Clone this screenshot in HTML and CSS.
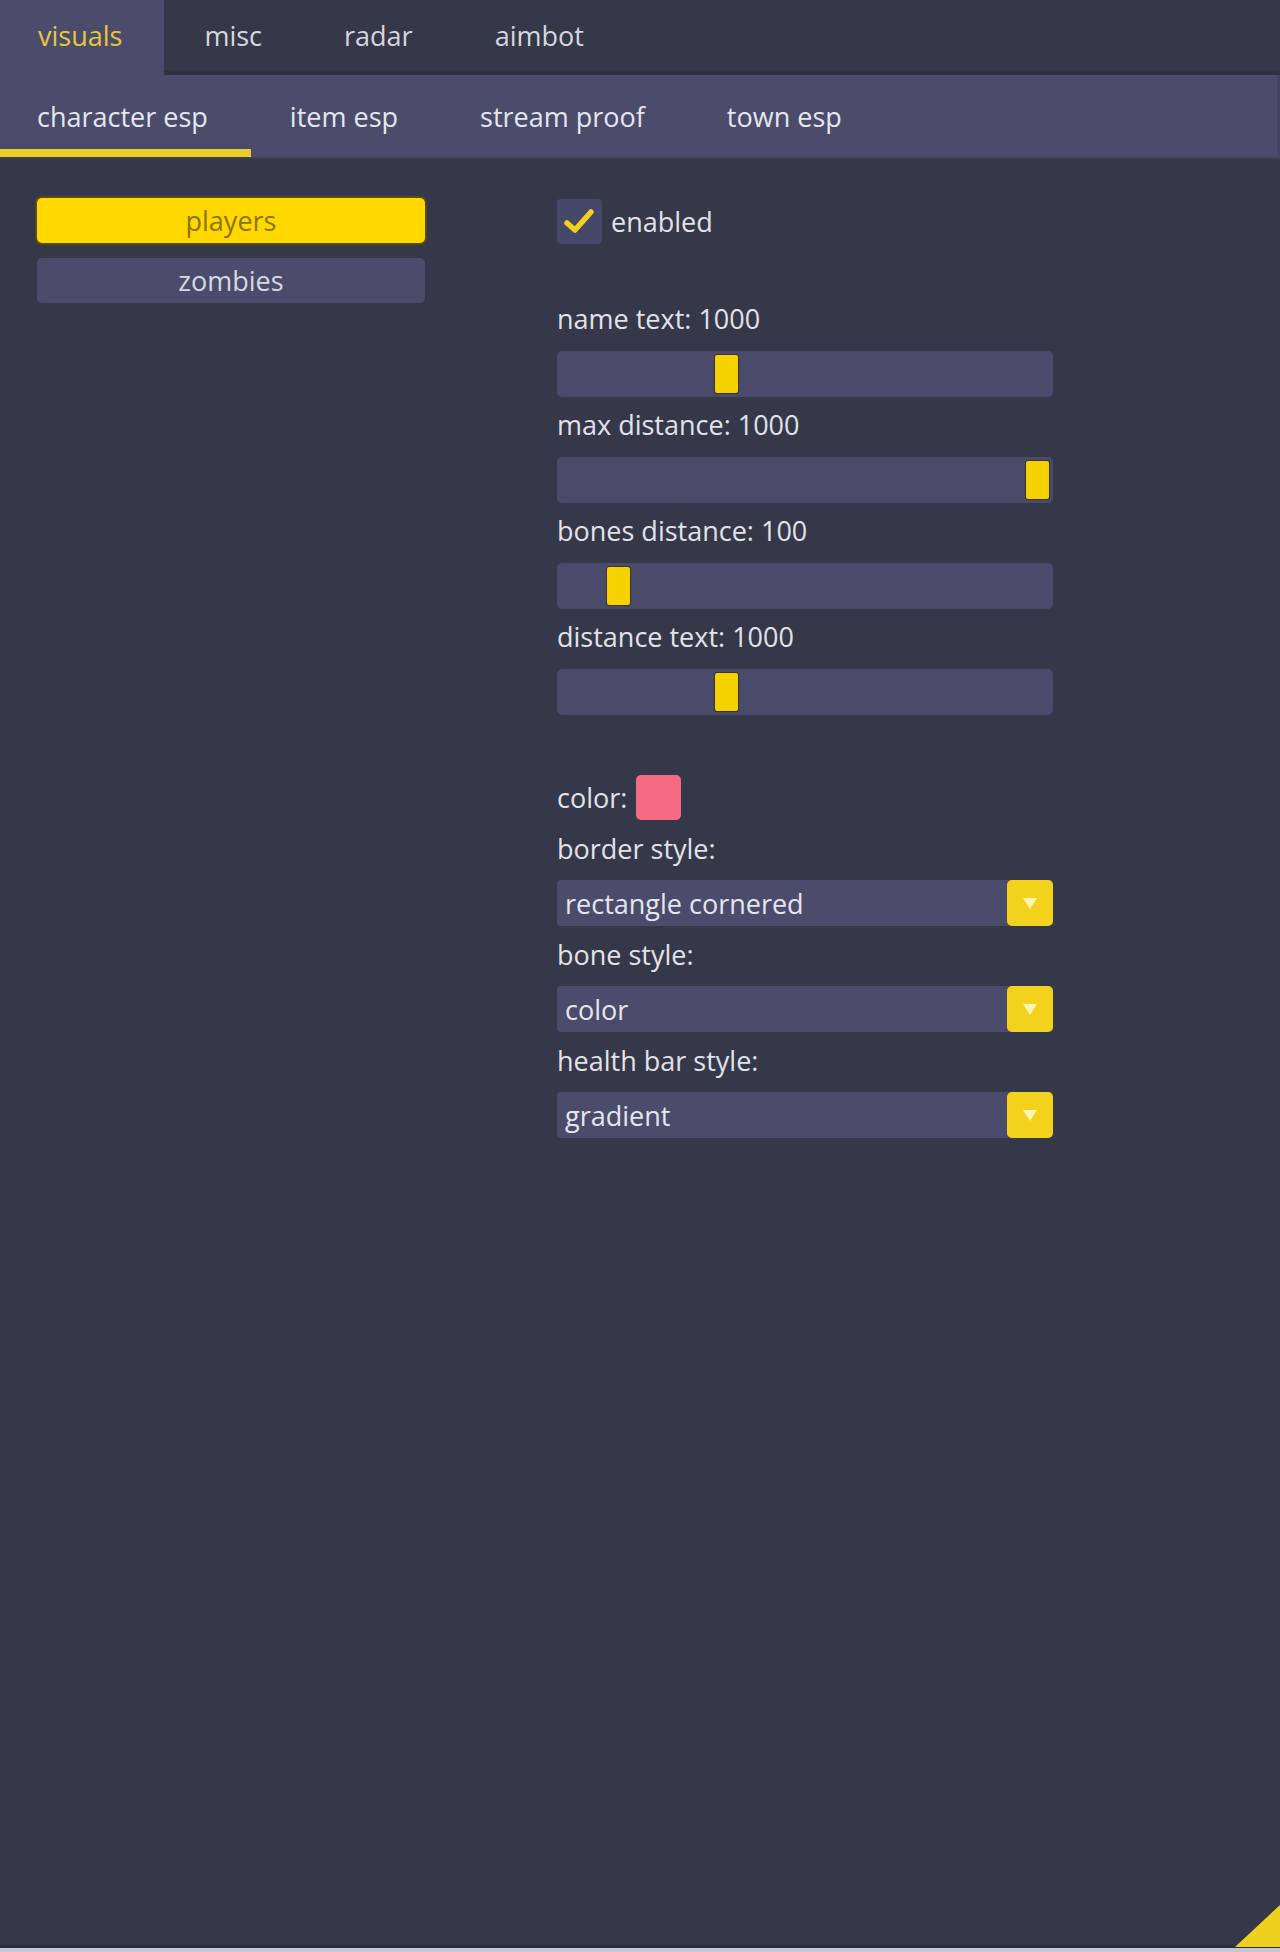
FILE: index.html
```html
<!DOCTYPE html>
<html lang="en">
<head>
<meta charset="utf-8">
<title>visuals</title>
<link rel="stylesheet" href="styles.css">
</head>
<body>
<div class="window">
  <div class="tabs">
    <div class="tab active">visuals</div>
    <div class="tab">misc</div>
    <div class="tab">radar</div>
    <div class="tab">aimbot</div>
    <div class="tab-fill"></div>
  </div>
  <div class="subtabs">
    <div class="subtab active">character esp</div>
    <div class="subtab">item esp</div>
    <div class="subtab">stream proof</div>
    <div class="subtab">town esp</div>
  </div>
  <div class="content">
    <div class="left">
      <div class="btn selected">players</div>
      <div class="btn">zombies</div>
    </div>
    <div class="right">
      <div class="check-row">
        <span class="checkbox">
          <svg viewBox="0 0 45 45" width="45" height="45"><path d="M10 24 L18 31 L34 13" fill="none" stroke="#f0d21e" stroke-width="5.5" stroke-linecap="round" stroke-linejoin="round"/></svg>
        </span>
        <span class="check-label">enabled</span>
      </div>
      <div class="fields">
        <div class="field">
          <div class="label">name text: 1000</div>
          <div class="slider"><span class="grab" style="--p:0.332"></span></div>
        </div>
        <div class="field">
          <div class="label">max distance: 1000</div>
          <div class="slider"><span class="grab" style="--p:1"></span></div>
        </div>
        <div class="field">
          <div class="label">bones distance: 100</div>
          <div class="slider"><span class="grab" style="--p:0.099"></span></div>
        </div>
        <div class="field">
          <div class="label">distance text: 1000</div>
          <div class="slider"><span class="grab" style="--p:0.332"></span></div>
        </div>
      </div>
      <div class="color-row">
        <span class="label">color:</span>
        <span class="swatch"></span>
      </div>
      <div class="combos">
        <div class="field">
          <div class="label">border style:</div>
          <div class="combo"><span class="combo-text">rectangle cornered</span><span class="combo-arrow"><svg viewBox="0 0 46 46" width="46" height="46"><path d="M16 18 L30 18 L23 29 Z" fill="#fff4b8"/></svg></span></div>
        </div>
        <div class="field">
          <div class="label">bone style:</div>
          <div class="combo"><span class="combo-text">color</span><span class="combo-arrow"><svg viewBox="0 0 46 46" width="46" height="46"><path d="M16 18 L30 18 L23 29 Z" fill="#fff4b8"/></svg></span></div>
        </div>
        <div class="field">
          <div class="label">health bar style:</div>
          <div class="combo"><span class="combo-text">gradient</span><span class="combo-arrow"><svg viewBox="0 0 46 46" width="46" height="46"><path d="M16 18 L30 18 L23 29 Z" fill="#fff4b8"/></svg></span></div>
        </div>
      </div>
    </div>
  </div>
  <div class="grip"></div>
</div>
<div class="edge-dark"></div>
<div class="edge-light"></div>
</body>
</html>
```

FILE: styles.css
```css
* {
  box-sizing: border-box;
}

html, body {
  margin: 0;
  padding: 0;
}

body {
  background: #353849;
  font-family: "Open Sans", "Noto Sans", "DejaVu Sans", sans-serif;
  font-size: 27px;
  color: #e2e2ea;
  width: 1280px;
  height: 1952px;
  overflow: hidden;
}

.window {
  position: relative;
  height: 1945px;
  background: #353849;
  display: flex;
  flex-direction: column;
}

/* top tabs */
.tabs {
  display: flex;
  height: 75px;
  flex: none;
}

.tab {
  display: flex;
  align-items: center;
  padding: 0 42px 0 40px;
  color: #d6d6de;
  border-bottom: 4px solid #2e3142;
  line-height: 1;
}

.tab.active {
  background: #4b4c6c;
  color: #e8c63e;
  border-bottom: none;
  padding: 0 42px 4px 38px;
}

.tab-fill {
  flex: 1;
  border-bottom: 4px solid #2e3142;
}

/* sub tabs */
.subtabs {
  display: flex;
  height: 84px;
  flex: none;
  background: #4b4c6c;
  border-right: 3px solid #43445f;
  border-bottom: 2px solid #3e4058;
}

.subtab {
  display: flex;
  align-items: center;
  padding: 8px 43px 0 39px;
  color: #e6e6ee;
  border-bottom: 8px solid transparent;
}

.subtab.active {
  padding-left: 37px;
  border-bottom-color: #e8cf2a;
}

/* content */
.content {
  display: flex;
  padding: 39px 0 0 37px;
  gap: 132px;
}

.left {
  width: 388px;
  display: flex;
  flex-direction: column;
  gap: 15px;
}

.btn {
  height: 45px;
  border-radius: 5px;
  background: #4b4c6c;
  color: #d8d8e2;
  display: flex;
  align-items: center;
  justify-content: center;
}

.btn.selected {
  background: #ffd800;
  color: #8a7400;
  box-shadow: 0 0 0 2px #5a4a10;
}

.right {
  width: 496px;
  display: flex;
  flex-direction: column;
}

.check-row {
  display: flex;
  align-items: center;
  gap: 9px;
  height: 45px;
  margin-top: 1px;
}

.checkbox {
  width: 45px;
  height: 45px;
  border-radius: 4px;
  background: #464869;
  display: flex;
}

.label {
  line-height: 36px;
  height: 36px;
  white-space: nowrap;
}

.fields {
  margin-top: 57px;
  display: flex;
  flex-direction: column;
  gap: 10px;
}

.field {
  display: flex;
  flex-direction: column;
  gap: 14px;
}

.slider {
  height: 46px;
  border-radius: 5px;
  background: #4a4b6b;
  display: flex;
  align-items: center;
  padding: 0 4px;
}

.grab {
  flex: none;
  width: 23px;
  height: 38px;
  border-radius: 2px;
  background: #f5d200;
  box-shadow: 0 0 0 1px #3a3520;
  margin-left: calc(var(--p) * (100% - 23px));
}

.color-row {
  margin-top: 60px;
  display: flex;
  align-items: center;
  gap: 9px;
  height: 45px;
}

.swatch {
  width: 45px;
  height: 45px;
  border-radius: 5px;
  background: #f56b83;
}

.combos {
  margin-top: 11px;
  display: flex;
  flex-direction: column;
  gap: 11px;
}

.combos .field {
  gap: 13px;
}

.combo {
  height: 46px;
  border-radius: 4px;
  background: #4b4c6c;
  display: flex;
  align-items: center;
}

.combo-text {
  flex: 1;
  padding-left: 8px;
  color: #e6e6ee;
}

.combo-arrow {
  width: 46px;
  height: 46px;
  border-radius: 5px;
  background: #f2d21c;
  display: flex;
}

.grip {
  position: absolute;
  right: 0;
  bottom: -2px;
  width: 45px;
  height: 42px;
  background: #efd01e;
  clip-path: polygon(100% 0, 100% 100%, 0 100%);
}

.edge-dark {
  height: 3px;
  background: #2b2d3a;
}

.edge-light {
  height: 4px;
  background: #c6c7d4;
}
```
